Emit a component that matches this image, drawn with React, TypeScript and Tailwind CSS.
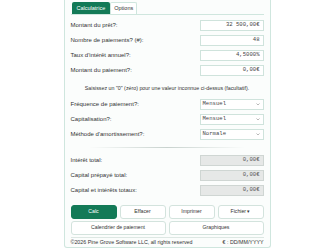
import React from 'react';

const font = { fontFamily: '"Liberation Sans", Arial, sans-serif' };
const mono = { fontFamily: '"Liberation Mono", "DejaVu Sans Mono", monospace' };

const INPUTS = [
  { label: 'Montant du prêt?:', value: '32 500,00€' },
  { label: 'Nombre de paiements? (#):', value: '48' },
  { label: "Taux d'intérêt annuel?:", value: '4,5000%' },
  { label: 'Montant du paiement?:', value: '0,00€' },
];

const SELECTS = [
  { label: 'Fréquence de paiement?:', value: 'Mensuel' },
  { label: 'Capitalisation?:', value: 'Mensuel' },
  { label: "Méthode d'amortissement?:", value: 'Normale' },
];

const RESULTS = [
  { label: 'Intérêt total:', value: '0,00€' },
  { label: 'Capital prépayé total:', value: '0,00€' },
  { label: 'Capital et intérêts totaux:', value: '0,00€' },
];

function Row({ label, children }: { label: string; children: React.ReactNode }) {
  return (
    <div className="flex items-center justify-between h-[15px]">
      <span className="text-[6px] text-[#333]">{label}</span>
      {children}
    </div>
  );
}

function Btn({ children, primary }: { children: React.ReactNode; primary?: boolean }) {
  return (
    <button
      className={
        'h-[14px] rounded-[3px] text-[5.2px] flex items-center justify-center ' +
        (primary ? 'bg-[#137a57] text-white border border-[#137a57]' : 'bg-white text-[#333] border border-[#d3e3dd]')
      }
    >
      {children}
    </button>
  );
}

export default function App() {
  return (
    <div className="w-full bg-white" style={font}>
      <div className="w-[207px] h-[248px] mx-auto border-x border-b border-[#cfe6de] rounded-b-[3px] bg-[#fbfdfc] px-[6px] pt-[2px] flex flex-col">
        <div className="flex ml-[1px]">
          <div className="h-[12px] px-[5px] bg-[#137a57] text-white text-[5.5px] flex items-center rounded-t-[2px]">Calculatrice</div>
          <div className="h-[12px] px-[3px] bg-white text-[#333] text-[5.5px] flex items-center border border-[#cfe6de] border-b-0 rounded-t-[2px]">Options</div>
        </div>
        <div className="border-t border-[#cfe6de] pt-[3px]">
          {INPUTS.map(r => (
            <Row key={r.label} label={r.label}>
              <div className="w-[64px] h-[11px] bg-white border border-[#cfe3dc] flex items-center justify-end pr-[3px] text-[5.6px] text-[#444]" style={mono}>{r.value}</div>
            </Row>
          ))}
          <div className="text-[5.3px] text-[#333] text-center h-[16px] mt-[3px] flex items-center justify-center whitespace-nowrap">
            Saisissez un "0" (zéro) pour une valeur inconnue ci-dessus (facultatif).
          </div>
          {SELECTS.map(r => (
            <Row key={r.label} label={r.label}>
              <div className="w-[64px] h-[11px] bg-white border border-[#cfe3dc] flex items-center justify-between pl-[2px] pr-[3px] text-[5.6px] text-[#444]" style={mono}>
                <span>{r.value}</span>
                <svg width="4" height="3" viewBox="0 0 4 3"><path d="M0.5 0.5 L2 2 L3.5 0.5" fill="none" stroke="#888" strokeWidth="0.6" /></svg>
              </div>
            </Row>
          ))}
          <div className="h-[11px] flex items-center justify-center">
            <div className="w-[156px] h-[1px] bg-gradient-to-r from-transparent via-[#c8d2ce] to-transparent" />
          </div>
          {RESULTS.map(r => (
            <Row key={r.label} label={r.label}>
              <div className="w-[64px] h-[11px] bg-[#e6e8e7] border border-[#cfd6d3] flex items-center justify-end pr-[3px] text-[5.6px] text-[#555]" style={mono}>{r.value}</div>
            </Row>
          ))}
          <div className="grid grid-cols-4 gap-[3px] mt-[7px]">
            <Btn primary>Calc</Btn>
            <Btn>Effacer</Btn>
            <Btn>Imprimer</Btn>
            <Btn>Fichier&nbsp;▾</Btn>
          </div>
          <div className="grid grid-cols-2 gap-[3px] mt-[2px]">
            <Btn>Calendrier de paiement</Btn>
            <Btn>Graphiques</Btn>
          </div>
          <div className="mt-[2px] border-t border-[#dde7e3] flex justify-between items-center h-[10px] text-[5.3px] text-[#333]">
            <span>©2026 Pine Grove Software LLC, all rights reserved</span>
            <span>€ : DD/MM/YYYY</span>
          </div>
        </div>
      </div>
    </div>
  );
}
